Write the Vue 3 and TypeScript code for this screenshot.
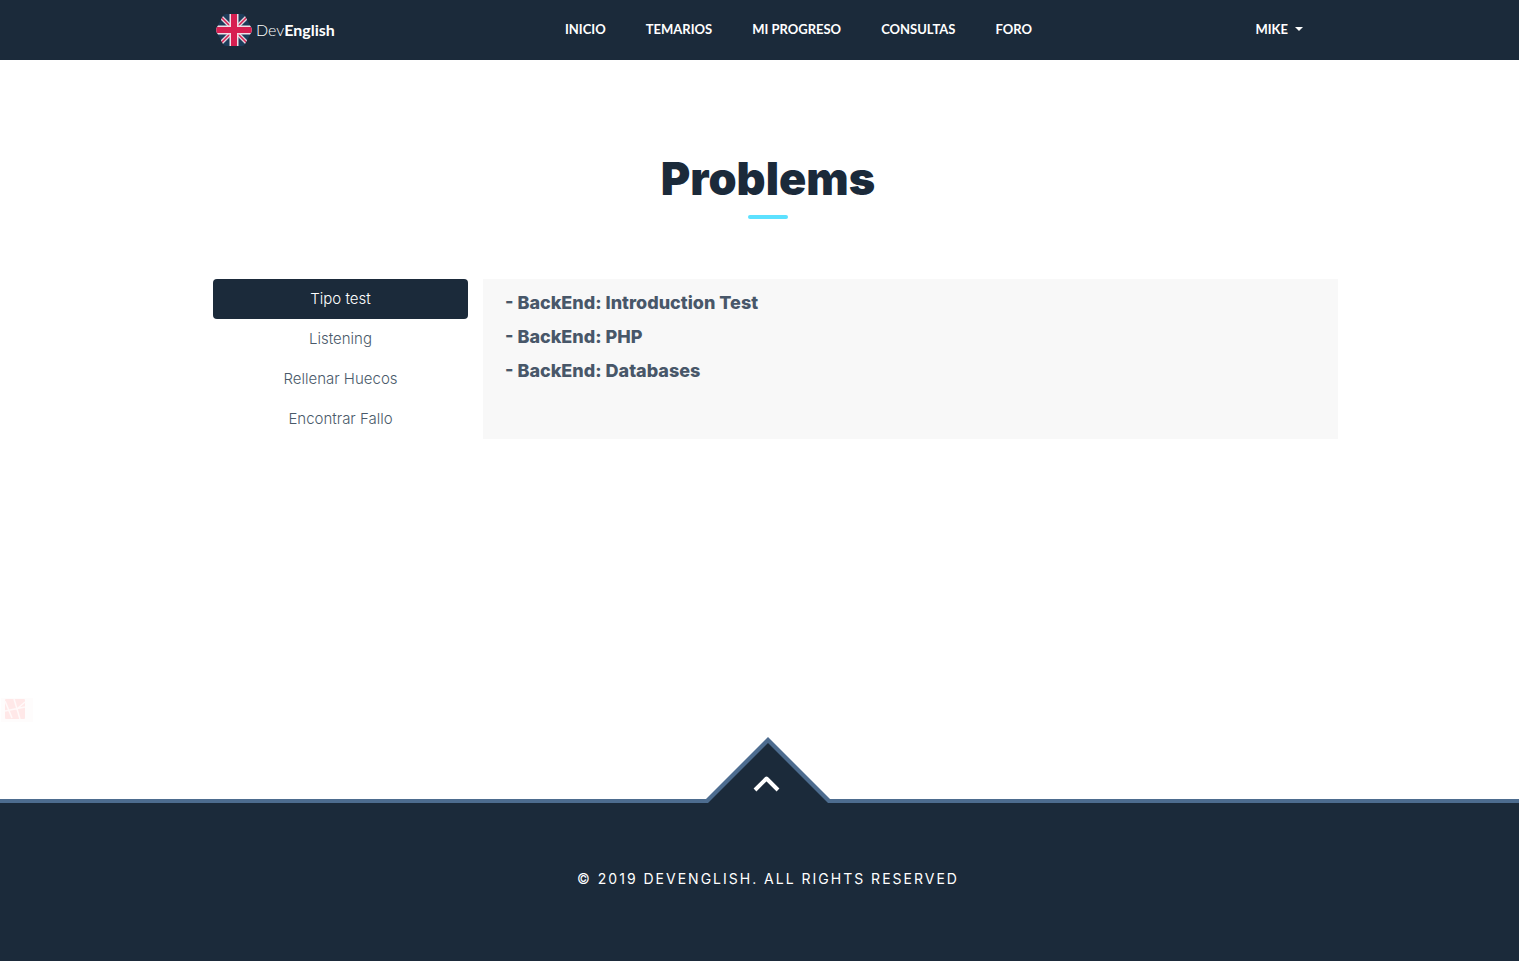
<script setup lang="ts">
import { ref } from 'vue'

interface Problem {
  title: string
  href: string
}

interface Category {
  name: string
  problems: Problem[]
}

const links: string[] = ['Inicio', 'Temarios', 'Mi progreso', 'Consultas', 'Foro']

const categories: Category[] = [
  {
    name: 'Tipo test',
    problems: [
      { title: 'BackEnd: Introduction Test', href: '#introduction' },
      { title: 'BackEnd: PHP', href: '#php' },
      { title: 'BackEnd: Databases', href: '#databases' },
    ],
  },
  { name: 'Listening', problems: [] },
  { name: 'Rellenar Huecos', problems: [] },
  { name: 'Encontrar Fallo', problems: [] },
]

const active = ref(0)
</script>

<template>
  <div id="top" class="page">
    <header class="header">
      <div class="header-inner">
        <a class="brand" href="#top">
          <svg class="flag" viewBox="0 0 36 34" aria-hidden="true">
            <defs>
              <clipPath id="hexagon">
                <path d="M10 1H26Q28 1 29 3L35.500 15Q36 17 35.500 19L29 31Q28 33 26 33H10Q8 33 7 31L.5 19Q0 17 .5 15L7 3Q8 1 10 1Z" />
              </clipPath>
            </defs>
            <g clip-path="url(#hexagon)">
              <path fill="#1d3c59" d="M0 0H36V34H0Z" />
              <path stroke="#e3d8e2" stroke-width="4" d="M5 4L31 30M31 4L5 30" />
              <path stroke="#d71f50" stroke-width="1.500" d="M5 4L31 30M31 4L5 30" />
              <path stroke="#f2dfe7" stroke-width="9" d="M18 0V34M0 17H36" />
              <path stroke="#d71f50" stroke-width="6" d="M18 0V34M0 17H36" />
            </g>
          </svg>
          <span class="brand-name">Dev<b>English</b></span>
        </a>
        <nav class="nav">
          <a v-for="link in links" :key="link" href="#top">{{ link }}</a>
        </nav>
        <button class="user" type="button">Mike<span class="caret"></span></button>
      </div>
    </header>

    <main class="main">
      <h1 class="title">Problems</h1>
      <div class="content">
        <div class="tabs" role="tablist">
          <button
            v-for="(category, index) in categories"
            :key="category.name"
            class="tab"
            :class="{ active: index === active }"
            type="button"
            role="tab"
            :aria-selected="index === active"
            @click="active = index"
          >
            {{ category.name }}
          </button>
        </div>
        <section class="panel" role="tabpanel">
          <a v-for="problem in categories[active].problems" :key="problem.title" :href="problem.href">- {{ problem.title }}</a>
        </section>
      </div>
    </main>

    <svg class="stamp" viewBox="0 0 33 28" aria-hidden="true">
      <path fill="#fefcfc" d="M1 2H33V26H1Z" />
      <rect x="5" y="3" width="20" height="20" rx="1" fill="#ffe8e8" />
      <path fill="none" stroke="#fff9f9" stroke-width="1.500" d="M5 5L12 22M5 15L25 11M14 3L17 13L25 6M17 13L20 23" />
    </svg>

    <footer class="footer">
      <a class="to-top" href="#top" aria-label="Back to top">
        <svg viewBox="0 0 126 66" aria-hidden="true">
          <path fill="#4d6c8f" d="M1 62L63 0L125 62V66H1Z" />
          <path fill="#1b2a3a" d="M3 66L63 6L123 66Z" />
          <path fill="none" stroke="#fff" stroke-width="4" stroke-linejoin="round" d="M50 53L61.500 41.500L73 53" />
        </svg>
      </a>
      <p>© 2019 DevEnglish. All rights reserved</p>
    </footer>
  </div>
</template>

<style>
body {
  margin: 0;
}
</style>

<style scoped>
.page {
  display: flex;
  flex-direction: column;
  min-height: 100vh;
  background: #fff;
  color: #1b2a3a;
  font-family: Inter, "Liberation Sans", sans-serif;
}

a {
  color: inherit;
  text-decoration: none;
}

button {
  border: 0;
  background: none;
  color: inherit;
  font-family: inherit;
  cursor: pointer;
}

.header {
  padding-left: 17px;
  background: #1b2a3a;
  color: #fff;
}

.header-inner {
  display: grid;
  grid-template-columns: 1fr auto 1fr;
  align-items: center;
  box-sizing: border-box;
  max-width: 1140px;
  height: 60px;
  margin: 0 auto;
  padding: 0 18px;
}

.brand {
  display: flex;
  align-items: center;
  gap: 4px;
}

.flag {
  width: 36px;
  height: 34px;
}

.brand-name {
  font-family: Lato, sans-serif;
  font-size: 16px;
  font-weight: 300;
  line-height: 20px;
}

.brand-name b {
  font-weight: 700;
}

.nav {
  display: flex;
  gap: 40px;
  margin-left: 61px;
  padding-bottom: 2px;
  font-family: Lato, sans-serif;
  font-size: 13px;
  font-weight: 700;
  line-height: 20px;
  text-transform: uppercase;
}

.user {
  display: flex;
  align-items: center;
  gap: 7px;
  justify-self: end;
  padding: 0 17px 2px;
  font-family: Lato, sans-serif;
  font-size: 13px;
  font-weight: 700;
  line-height: 20px;
  text-transform: uppercase;
}

.caret {
  border: 4px solid transparent;
  border-top-color: #fff;
  border-bottom: 0;
}

.main {
  flex: 1;
  padding: 89px 0 0 17px;
}

.title {
  margin: 0;
  font-size: 45px;
  font-weight: 900;
  line-height: 60px;
  text-align: center;
}

.title::after {
  content: "";
  display: block;
  width: 40px;
  height: 4px;
  margin: 6px auto 0;
  border-radius: 2px;
  background: #5ce1ff;
}

.content {
  display: grid;
  grid-template-columns: 255px 1fr;
  gap: 15px;
  box-sizing: border-box;
  max-width: 1140px;
  margin: 60px auto 0;
  padding-left: 15px;
}

.tabs {
  display: flex;
  flex-direction: column;
}

.tab {
  height: 40px;
  padding: 0 16px;
  border-radius: 4px;
  color: #4a5a6a;
  font-size: 15px;
  font-weight: 300;
  line-height: 24px;
}

.tab.active {
  background: #1b2a3a;
  color: #fff;
}

.panel {
  display: flex;
  flex-direction: column;
  gap: 10px;
  padding: 12px 22px;
  background: #f8f8f8;
  color: #485769;
  font-size: 18px;
  font-weight: 800;
  line-height: 24px;
}

.stamp {
  width: 33px;
  height: 28px;
  margin-bottom: 75px;
}

.footer {
  position: relative;
  padding: 64px 0 70px 17px;
  border-top: 4px solid #4d6c8f;
  background: #1b2a3a;
  color: #fff;
  text-align: center;
}

.to-top {
  position: absolute;
  top: -66px;
  left: calc(50% - 55px);
  width: 126px;
  height: 66px;
}

.to-top svg {
  display: block;
}

.footer p {
  margin: 0;
  font-size: 14px;
  line-height: 24px;
  letter-spacing: 2px;
  text-transform: uppercase;
}
</style>
